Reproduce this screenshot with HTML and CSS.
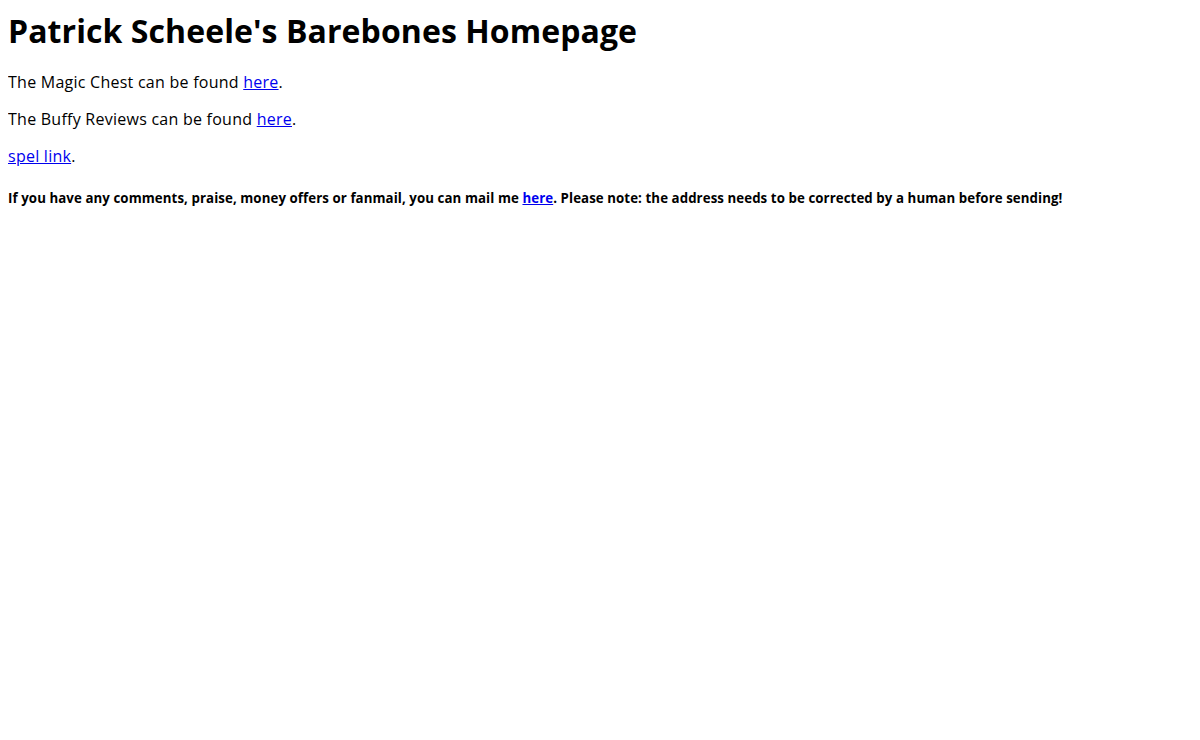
FILE: index.html
```html
<!DOCTYPE html>
<html lang="en">
<head>
    <meta charset="UTF-8">
    <title>Patrick Scheele's Barebones Homepage</title>
    <link rel="stylesheet" href="styles.css">
</head>
<body>
    <h1>Patrick Scheele's Barebones Homepage</h1>
    <p>The Magic Chest can be found <a href="#">here</a>.</p>
    <p>The Buffy Reviews can be found <a href="#">here</a>.</p>
    <p><a href="#">spel link</a>.</p>
    <h5>If you have any comments, praise, money offers or fanmail, you can mail me <a href="#">here</a>. Please note: the address needs to be corrected by a human before sending!</h5>
</body>
</html>
```

FILE: styles.css
```css
body {
    font-family: "Open Sans", sans-serif;
    line-height: 1.32;
    color: #000;
    background: #fff;
}
h1 {
    margin: 2px 0 20px;
    letter-spacing: 0.08px;
}
p {
    letter-spacing: 0.25px;
}
h5 {
    letter-spacing: 0.08px;
}
a {
    color: #0000ee;
}
```
